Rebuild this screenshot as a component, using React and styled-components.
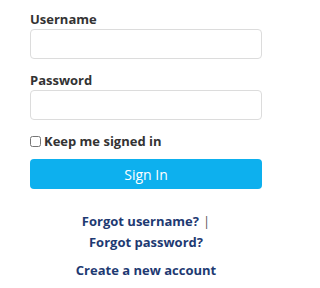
import React from "react";
import styled, { createGlobalStyle } from "styled-components";

const GlobalStyle = createGlobalStyle`
  body {
    margin: 0;
    background: #ffffff;
    font-family: "Open Sans", "Noto Sans", sans-serif;
  }
`;

const Form = styled.form`
  width: 232px;
  padding: 10px 26px 0 30px;
  display: flex;
  flex-direction: column;
`;

const Label = styled.label`
  font-size: 13px;
  line-height: 19px;
  font-weight: 700;
  color: #333333;
`;

const Input = styled.input`
  box-sizing: border-box;
  width: 100%;
  height: 30px;
  margin: 0 0 12px;
  border: 1px solid #dcdcdc;
  border-radius: 4px;
  background: #ffffff;
  font-family: inherit;
  font-size: 14px;
  padding: 0 8px;
`;

const CheckRow = styled.label`
  display: flex;
  align-items: center;
  gap: 3px;
  font-size: 13px;
  line-height: 19px;
  font-weight: 700;
  color: #333333;
  margin-bottom: 8px;
`;

const Check = styled.input`
  width: 11px;
  height: 11px;
  margin: 0;
`;

const Button = styled.button`
  height: 30px;
  border: none;
  border-radius: 4px;
  background: #0db0ee;
  color: #ffffff;
  font-family: inherit;
  font-size: 14px;
  cursor: pointer;
`;

const Links = styled.div`
  margin-top: 22px;
  display: flex;
  flex-direction: column;
  align-items: center;
  text-align: center;
  font-size: 13px;
  line-height: 21px;
  font-weight: 700;
`;

const Link = styled.a`
  color: #1e3a72;
  text-decoration: none;
`;

const Divider = styled.span`
  color: #555555;
  font-weight: 400;
  margin-left: 4px;
`;

const Create = styled(Link)`
  margin-top: 7px;
`;

export default function App() {
  return (
    <>
      <GlobalStyle />
      <Form onSubmit={(e) => e.preventDefault()}>
        <Label htmlFor="username">Username</Label>
        <Input id="username" type="text" />
        <Label htmlFor="password">Password</Label>
        <Input id="password" type="password" />
        <CheckRow>
          <Check type="checkbox" />
          Keep me signed in
        </CheckRow>
        <Button type="submit">Sign In</Button>
        <Links>
          <div>
            <Link href="#">Forgot username?</Link>
            <Divider>|</Divider>
          </div>
          <Link href="#">Forgot password?</Link>
          <Create href="#">Create a new account</Create>
        </Links>
      </Form>
    </>
  );
}
